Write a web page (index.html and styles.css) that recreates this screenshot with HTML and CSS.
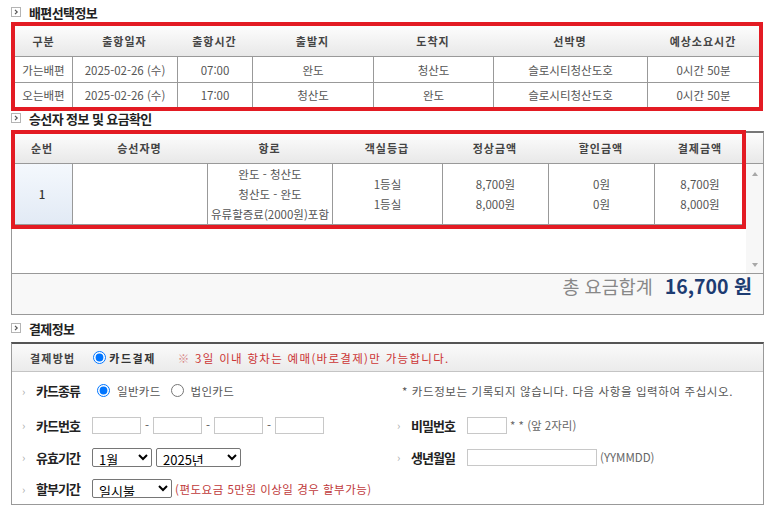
FILE: index.html
```html
<!DOCTYPE html>
<html lang="ko">
<head>
<meta charset="utf-8">
<title>예매</title>
<link rel="stylesheet" href="styles.css">
</head>
<body>
<div class="page">
  <h2 class="sec-title t1"><svg class="ico" viewBox="0 0 10 10"><rect x="0.5" y="0.5" width="9" height="9" fill="#fff" stroke="#b4b4b4"/><path d="M4 2.8 L6.2 5 L4 7.2" fill="none" stroke="#555" stroke-width="1.2"/></svg>배편선택정보</h2>
  <div class="sched">
    <div class="sched-row sched-head">
      <div class="cell">구분</div><div class="cell">출항일자</div><div class="cell">출항시간</div><div class="cell">출발지</div><div class="cell">도착지</div><div class="cell">선박명</div><div class="cell">예상소요시간</div>
    </div>
    <div class="sched-row sched-body r1">
      <div class="cell">가는배편</div><div class="cell">2025-02-26 (수)</div><div class="cell">07:00</div><div class="cell">완도</div><div class="cell">청산도</div><div class="cell">슬로시티청산도호</div><div class="cell">0시간 50분</div>
    </div>
    <div class="sched-row sched-body r2">
      <div class="cell">오는배편</div><div class="cell">2025-02-26 (수)</div><div class="cell">17:00</div><div class="cell">청산도</div><div class="cell">완도</div><div class="cell">슬로시티청산도호</div><div class="cell">0시간 50분</div>
    </div>
  </div>

  <h2 class="sec-title t2"><svg class="ico" viewBox="0 0 10 10"><rect x="0.5" y="0.5" width="9" height="9" fill="#fff" stroke="#b4b4b4"/><path d="M4 2.8 L6.2 5 L4 7.2" fill="none" stroke="#555" stroke-width="1.2"/></svg>승선자 정보 및 요금확인</h2>
  <div class="pax">
    <div class="pax-grid pax-head">
      <div class="cell">순번</div><div class="cell">승선자명</div><div class="cell">항로</div><div class="cell">객실등급</div><div class="cell">정상금액</div><div class="cell">할인금액</div><div class="cell">결제금액</div><div class="cell"></div>
    </div>
    <div class="pax-body">
      <div class="pax-rows">
        <div class="pax-row">
          <div class="cell num">1</div>
          <div class="cell"></div>
          <div class="cell lines"><span>완도 - 청산도</span><span>청산도 - 완도</span><span>유류할증료(2000원)포함</span></div>
          <div class="cell lines"><span>1등실</span><span>1등실</span></div>
          <div class="cell lines"><span>8,700원</span><span>8,000원</span></div>
          <div class="cell lines"><span>0원</span><span>0원</span></div>
          <div class="cell lines"><span>8,700원</span><span>8,000원</span></div>
        </div>
      </div>
      <div class="scroll"><span class="arr up"></span><span class="arr down"></span></div>
    </div>
    <div class="pax-total">
      <span class="total-label">총 요금합계</span><span class="total-value">16,700 원</span>
    </div>
    <div class="pax-mark"></div>
  </div>

  <h2 class="sec-title t3"><svg class="ico" viewBox="0 0 10 10"><rect x="0.5" y="0.5" width="9" height="9" fill="#fff" stroke="#b4b4b4"/><path d="M4 2.8 L6.2 5 L4 7.2" fill="none" stroke="#555" stroke-width="1.2"/></svg>결제정보</h2>
  <div class="pay">
    <div class="pay-method">
      <span class="method-label">결제방법</span>
      <input class="radio method-radio" type="radio" name="method" checked>
      <span class="method-name">카드결제</span>
      <span class="method-note"><span class="kome">※</span> 3일 이내 항차는 예매(바로결제)만 가능합니다.</span>
    </div>
    <div class="pay-fields">
      <div class="field">
        <span class="bul">›</span><span class="flabel">카드종류</span>
        <input class="radio r-first" type="radio" name="ctype" checked><span class="rtext">일반카드</span>
        <input class="radio r-second" type="radio" name="ctype"><span class="rtext">법인카드</span>
      </div>
      <div class="field notice">* 카드정보는 기록되지 않습니다. 다음 사항을 입력하여 주십시오.</div>

      <div class="field">
        <span class="bul">›</span><span class="flabel">카드번호</span>
        <input class="tin card" type="text"><span class="dash">-</span><input class="tin card" type="text"><span class="dash">-</span><input class="tin card" type="text"><span class="dash">-</span><input class="tin card" type="text">
      </div>
      <div class="field">
        <span class="bul">›</span><span class="flabel">비밀번호</span>
        <input class="tin pw" type="password"><span class="hint">* * (앞 2자리)</span>
      </div>

      <div class="field">
        <span class="bul">›</span><span class="flabel">유효기간</span>
        <select class="sel sel-month"><option>1월</option></select>
        <select class="sel sel-year"><option>2025년</option></select>
      </div>
      <div class="field">
        <span class="bul">›</span><span class="flabel">생년월일</span>
        <input class="tin birth" type="text"><span class="hint">(YYMMDD)</span>
      </div>

      <div class="field">
        <span class="bul">›</span><span class="flabel">할부기간</span>
        <select class="sel sel-inst"><option>일시불</option></select>
        <span class="inst-note">(편도요금 5만원 이상일 경우 할부가능)</span>
      </div>
      <div class="field"></div>
    </div>
  </div>
</div>
</body>
</html>
```

FILE: styles.css
```css
* { box-sizing: border-box; }
html, body { margin: 0; padding: 0; background: #fff; }
body {
  font-family: "Noto Sans CJK KR", "Noto Sans", sans-serif;
  font-size: 11.5px;
  color: #555;
}
.page { width: 764px; padding-left: 11px; }

.sec-title {
  display: flex;
  align-items: center;
  height: 14px;
  margin: 0;
  font-size: 13px;
  font-weight: 700;
  color: #222;
  letter-spacing: -0.6px;
}
.sec-title .ico { width: 10px; height: 10px; margin-right: 8px; flex: none; }
.t1 { margin: 5px 0 3px; }
.t2 { margin: 0 0 6px; }
.t3 { margin: 6px 0 7px; }

.cell {
  display: flex;
  align-items: center;
  justify-content: center;
  white-space: nowrap;
}

/* schedule table */
.sched { width: 752px; border: 4px solid #e31b23; }
.sched-row {
  display: grid;
  grid-template-columns: 57px 105px 75px 121px 120px 154px 112px;
}
.sched-head {
  height: 31px;
  background: linear-gradient(#fdfdfd, #e8e8e8);
  border-bottom: 1px solid #999;
}
.sched-head .cell, .pax-head .cell {
  font-size: 11px;
  font-weight: 700;
  color: #444;
  letter-spacing: 1px;
}
.sched-body .cell + .cell { border-left: 1px solid #999; }
.r1 { height: 26px; border-bottom: 1px solid #999; }
.r2 { height: 24px; }

/* passenger table */
.pax {
  position: relative;
  width: 753px;
  border: 1px solid #999;
  border-top: 2px solid #777;
}
.pax-grid, .pax-row {
  display: grid;
  grid-template-columns: 60px 135px 125px 110px 106px 106px 92px;
}
.pax-head {
  grid-template-columns: 60px 135px 125px 110px 106px 106px 92px 17px;
  height: 31px;
  background: linear-gradient(#fdfdfd, #e8e8e8);
  border-bottom: 1px solid #999;
}
.pax-body { display: flex; height: 109px; }
.pax-rows { width: 734px; }
.pax-row { height: 61px; border-bottom: 1px solid #999; }
.pax-row .cell + .cell { border-left: 1px solid #999; }
.pax-row .cell:last-child { border-right: 1px solid #999; }
.num {
  background: linear-gradient(#f4f8fd, #e2eaf5);
  color: #333;
  font-weight: 500;
}
.lines { flex-direction: column; line-height: 20px; }
.scroll {
  width: 17px;
  background: #f7f7f7;
  display: flex;
  flex-direction: column;
  align-items: center;
  justify-content: space-between;
  padding: 8px 0 6px;
}
.arr { width: 0; height: 0; border-left: 3.5px solid transparent; border-right: 3.5px solid transparent; }
.arr.up { border-bottom: 4px solid #a8a8a8; }
.arr.down { border-top: 4px solid #a8a8a8; }
.pax-total {
  height: 41px;
  border-top: 1px solid #999;
  background: #f8f8f8;
  display: flex;
  justify-content: flex-end;
  align-items: flex-start;
  padding: 0 11px 0 0;
  line-height: 24px;
}
.total-label { font-size: 18.5px; color: #888; margin-right: 12px; }
.total-value { font-size: 19.5px; font-weight: 700; color: #1d3c72; }
.pax-mark {
  position: absolute;
  left: -1px;
  top: -3px;
  width: 735px;
  height: 99px;
  border: 4px solid #e31b23;
  pointer-events: none;
}

/* payment */
.pay {
  width: 753px;
  border: 1px solid #999;
  border-top: 2px solid #555;
}
.pay-method {
  height: 28px;
  display: flex;
  align-items: center;
  background: linear-gradient(#fafafa, #ebebeb);
  border-bottom: 1px solid #c4c4c4;
  padding-left: 18px;
}
.method-label { font-size: 11px; font-weight: 700; color: #444; letter-spacing: 1.2px; }
.radio { width: 13px; height: 13px; margin: 0; flex: none; }
.method-radio { margin-left: 18px; }
.method-name { font-size: 11px; font-weight: 700; color: #333; letter-spacing: 1.5px; margin-left: 3px; }
.method-note { margin-left: 22px; color: #cc3535; letter-spacing: 1.3px; }
.kome { color: #d98a8a; }

.pay-fields {
  display: grid;
  grid-template-columns: 375px 1fr;
  grid-template-rows: 37px 32px 32px 31px;
  padding-left: 10px;
}
.field { display: flex; align-items: center; white-space: nowrap; }
.bul { width: 14px; color: #aaa; font-size: 11px; }
.flabel { width: 56px; font-size: 13px; font-weight: 700; color: #222; letter-spacing: -1px; }
.r-first { margin-left: 5px; }
.r-second { margin-left: 10px; }
.rtext { margin-left: 7px; color: #555; letter-spacing: 0.3px; }
.notice { padding-left: 5px; color: #555; letter-spacing: 0.6px; }
.tin {
  height: 17px;
  border: 1px solid #c8c8c8;
  padding: 0 2px;
  font: inherit;
  outline: none;
}
.card { width: 49px; }
.dash { width: 12px; text-align: center; color: #555; }
.pw { width: 40px; }
.birth { width: 130px; }
.hint { margin-left: 3px; color: #666; }
.sel {
  height: 19px;
  font-family: "Noto Sans CJK KR", "Noto Sans", sans-serif;
  font-size: 13px;
  color: #000;
  padding: 0 0 0 2px;
  border: 1px solid #767676;
  border-radius: 2px;
  background: #fff;
}
.sel-month { width: 60px; }
.sel-year { width: 85px; margin-left: 4px; }
.sel-inst { width: 80px; }
.inst-note { margin-left: 3px; color: #c0393b; letter-spacing: 0.5px; }
```
